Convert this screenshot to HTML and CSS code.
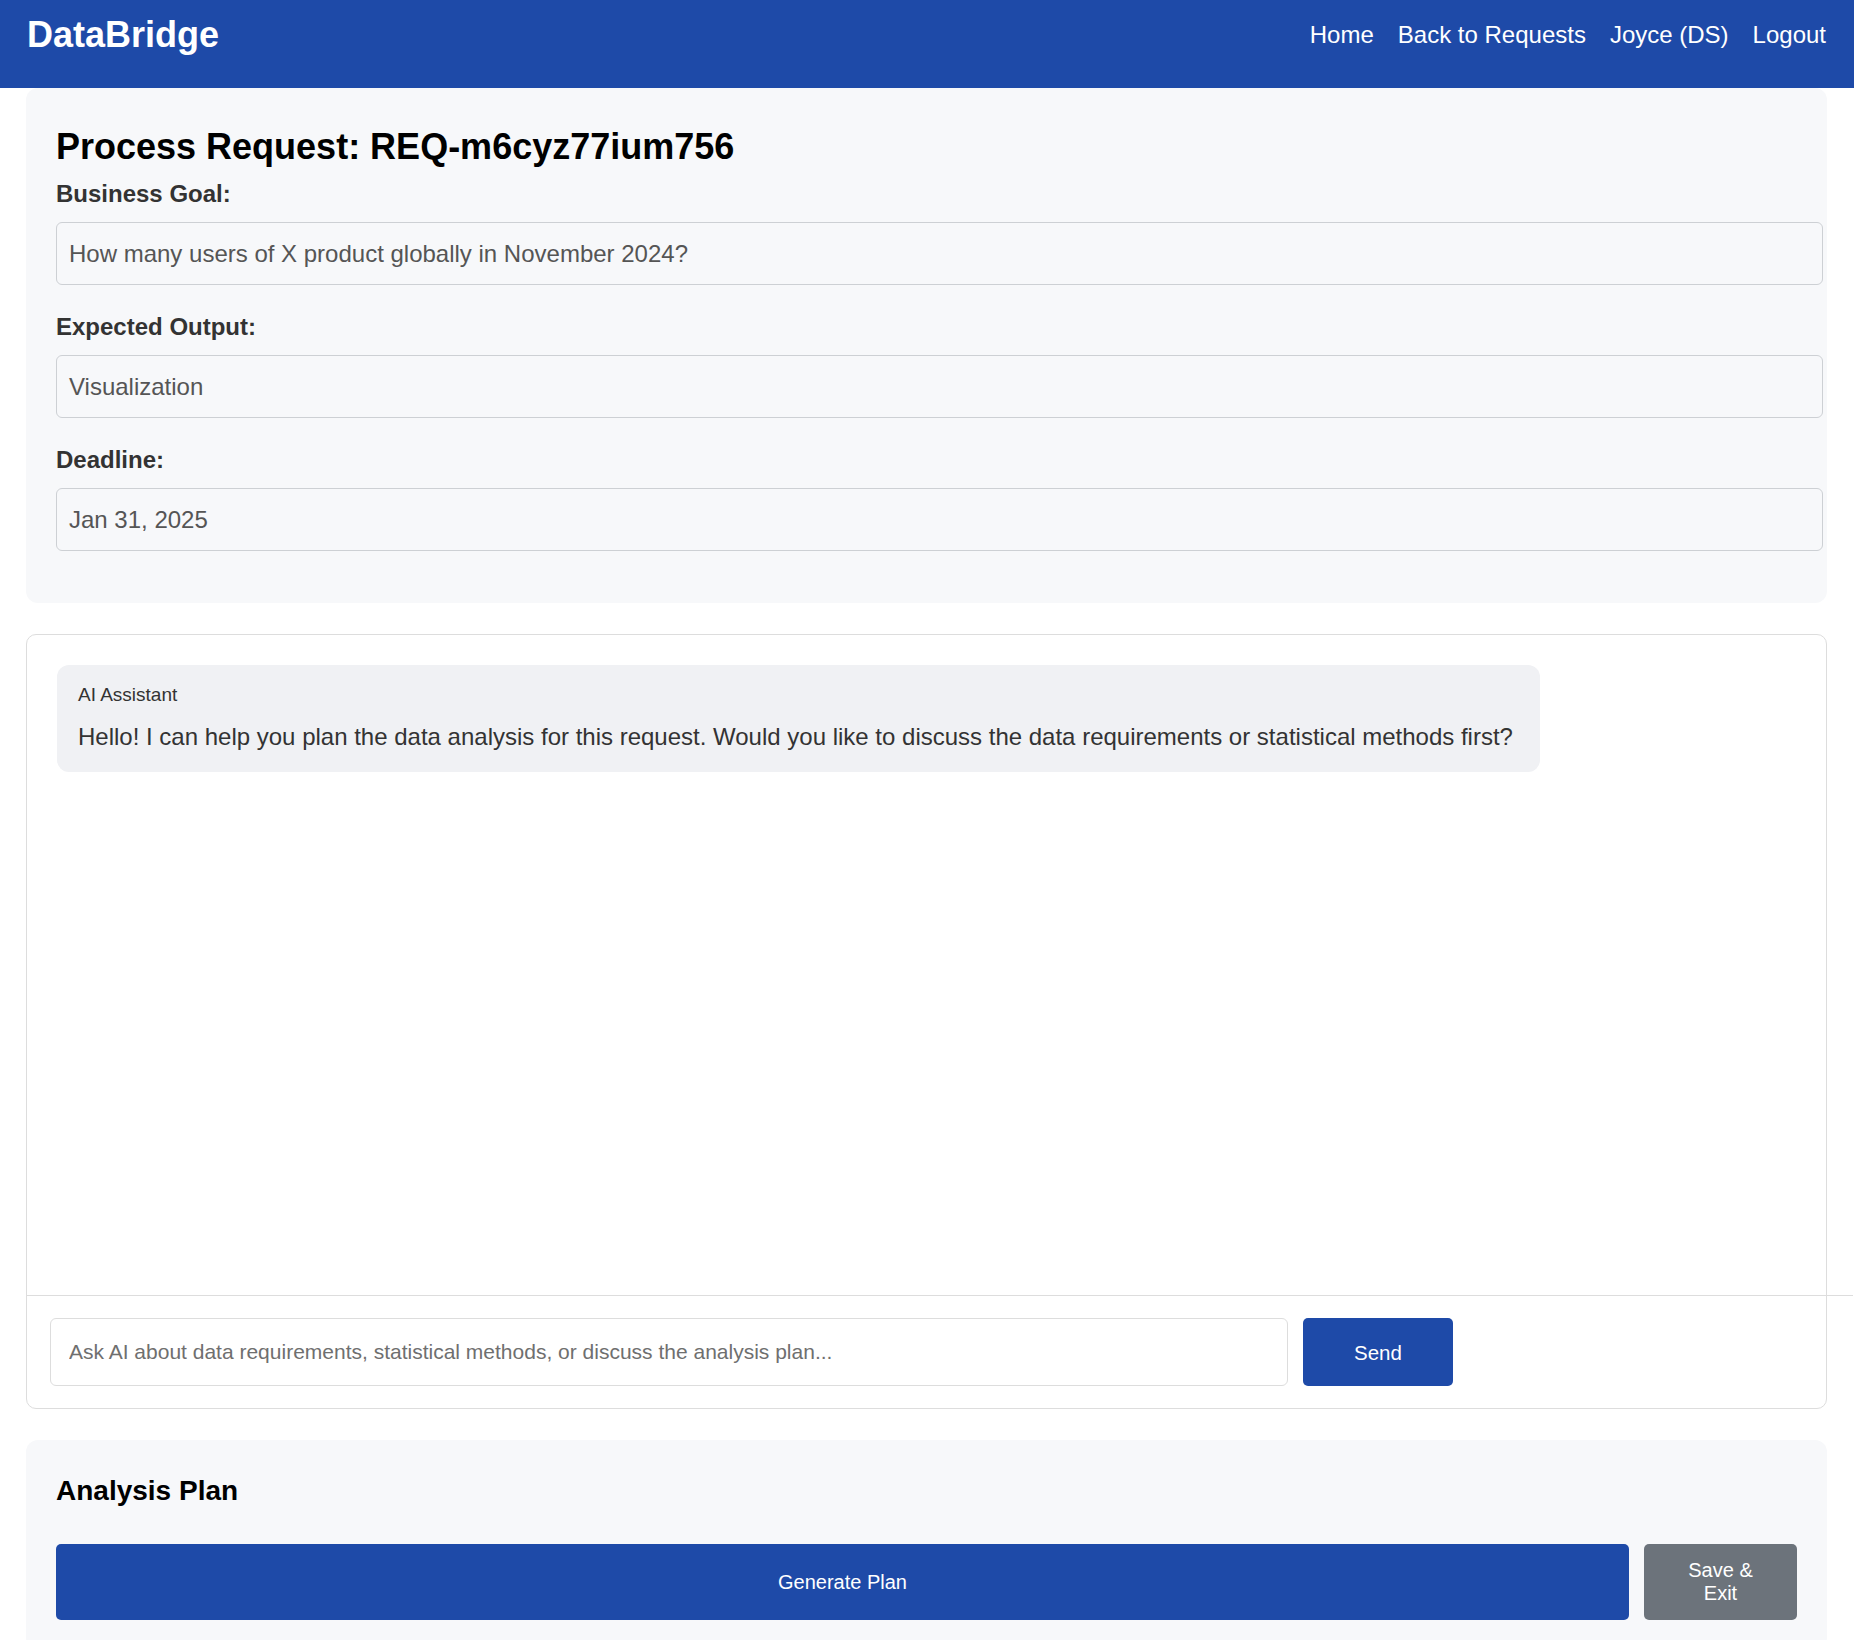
FILE: index.html
```html
<!DOCTYPE html>
<html lang="en">
<head>
<meta charset="utf-8">
<title>DataBridge - Process Request</title>
<link rel="stylesheet" href="styles.css">
</head>
<body>
<header class="topbar">
  <div class="brand">DataBridge</div>
  <nav class="nav">
    <a href="#">Home</a>
    <a href="#">Back to Requests</a>
    <a href="#">Joyce (DS)</a>
    <a href="#">Logout</a>
  </nav>
</header>
<main class="main">
  <section class="panel details">
    <h2 class="title">Process Request: REQ-m6cyz77ium756</h2>
    <div class="group">
      <div class="label">Business Goal:</div>
      <div class="field">How many users of X product globally in November 2024?</div>
    </div>
    <div class="group">
      <div class="label">Expected Output:</div>
      <div class="field">Visualization</div>
    </div>
    <div class="group">
      <div class="label">Deadline:</div>
      <div class="field">Jan 31, 2025</div>
    </div>
  </section>

  <section class="chat">
    <div class="messages">
      <div class="bubble">
        <div class="sender">AI Assistant</div>
        <div class="msg">Hello! I can help you plan the data analysis for this request. Would you like to discuss the data requirements or statistical methods first?</div>
      </div>
    </div>
    <div class="composer">
      <input class="chat-input" type="text" placeholder="Ask AI about data requirements, statistical methods, or discuss the analysis plan...">
      <button class="btn btn-primary send">Send</button>
    </div>
  </section>

  <section class="panel plan">
    <h3 class="plan-title">Analysis Plan</h3>
    <div class="actions">
      <button class="btn btn-primary generate">Generate Plan</button>
      <button class="btn btn-secondary save">Save &amp; Exit</button>
    </div>
  </section>
</main>
</body>
</html>
```

FILE: styles.css
```css
* { box-sizing: border-box; }

html, body {
  margin: 0;
  padding: 0;
  background: #ffffff;
  font-family: "Liberation Sans", Arial, Helvetica, sans-serif;
  overflow-x: hidden;
}

.topbar {
  background: #1e4aa8;
  color: #ffffff;
  display: flex;
  justify-content: space-between;
  align-items: center;
  padding: 14px 28px 33px 27px;
}

.brand {
  font-size: 36px;
  font-weight: bold;
  line-height: 41px;
}

.nav {
  display: flex;
  gap: 24px;
}

.nav a {
  color: #ffffff;
  text-decoration: none;
  font-size: 24px;
  line-height: 27px;
}

.main {
  padding: 0 27px 0 26px;
  display: flex;
  flex-direction: column;
  gap: 31px;
}

.panel {
  background: #f7f8fa;
  border-radius: 12px;
  padding: 30px;
}

.title {
  margin: 8px 0 13px;
  font-size: 36px;
  line-height: 41px;
  font-weight: bold;
  color: #000000;
}

.group {
  margin-bottom: 28px;
}

.group:last-child {
  margin-bottom: 22px;
}

.label {
  font-size: 24px;
  line-height: 27.5px;
  font-weight: bold;
  color: #333333;
  margin-bottom: 14px;
}

.field {
  box-sizing: content-box;
  width: 100%;
  padding: 17px 12px;
  border: 1px solid #cdd0d4;
  border-radius: 6px;
  background: #f7f8fa;
  font-size: 24px;
  line-height: 27.6px;
  color: #555555;
}

.chat {
  border: 1px solid #dddddd;
  border-radius: 10px;
  background: #ffffff;
}

.messages {
  height: 660px;
  padding: 30px;
  display: flex;
  flex-direction: column;
  align-items: flex-start;
}

.bubble {
  width: 85.3%;
  background: #f0f1f4;
  border-radius: 12px;
  padding: 19px 21px 21px;
  color: #333333;
}

.sender {
  font-size: 19px;
  line-height: 22px;
  margin-bottom: 17px;
}

.msg {
  font-size: 24px;
  line-height: 27.6px;
}

.composer {
  width: calc(100% + 27px);
  border-top: 1px solid #dddddd;
  padding: 22px 23px;
  display: flex;
  gap: 15px;
}

.chat-input {
  flex: 0 0 1238px;
  height: 68px;
  border: 1px solid #dddddd;
  border-radius: 6px;
  padding: 0 18px;
  font-family: "Liberation Sans", Arial, Helvetica, sans-serif;
  font-size: 21px;
  color: #333333;
  background: #ffffff;
  outline: none;
}

.chat-input::placeholder {
  color: #6f6f6f;
}

.btn {
  border: none;
  border-radius: 5px;
  color: #ffffff;
  font-family: "Liberation Sans", Arial, Helvetica, sans-serif;
  font-size: 20px;
  line-height: 23px;
  cursor: pointer;
}

.btn-primary {
  background: #1e4aa8;
}

.btn-secondary {
  background: #6c737b;
}

.send {
  flex: 0 0 150px;
  height: 68px;
  font-size: 20.5px;
}

.plan-title {
  margin: 5px 0 37px;
  font-size: 28px;
  line-height: 32px;
  font-weight: bold;
  color: #000000;
}

.actions {
  display: flex;
  gap: 15px;
}

.generate {
  flex: 1 1 auto;
  height: 76px;
}

.save {
  flex: 0 0 153px;
  height: 76px;
  padding: 0 28px;
  text-align: center;
}
```
